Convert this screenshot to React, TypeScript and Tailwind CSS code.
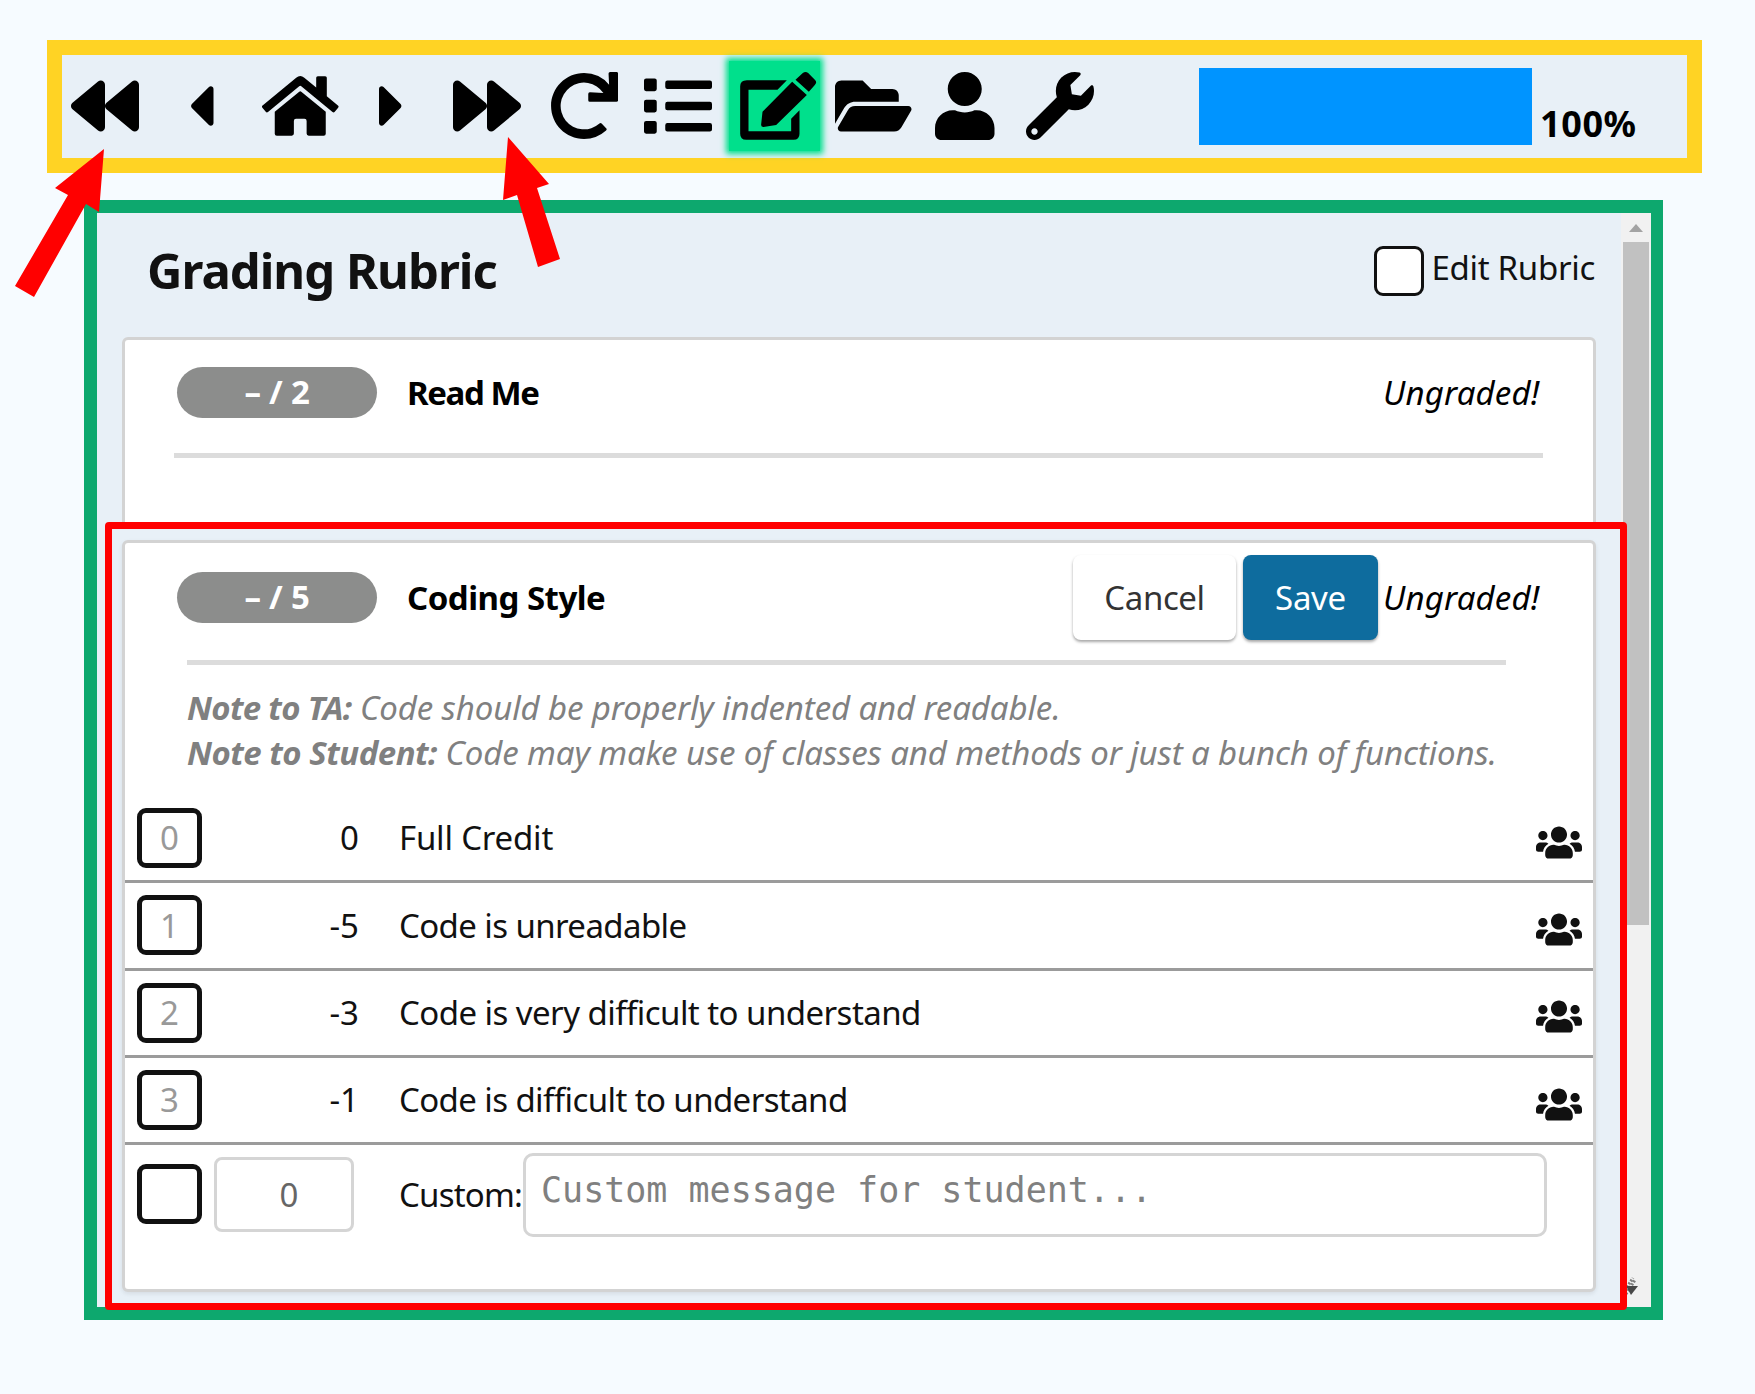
import {
  FaBackward,
  FaCaretLeft,
  FaCaretRight,
  FaFolderOpen,
  FaForward,
  FaHome,
  FaList,
  FaRedo,
  FaUser,
  FaUsers,
  FaWrench,
} from 'react-icons/fa'

const rows = [
  { key: '0', value: '0', label: 'Full Credit', tracking: 'tracking-[-0.2px]' },
  { key: '1', value: '-5', label: 'Code is unreadable', tracking: 'tracking-[-0.6px]' },
  { key: '2', value: '-3', label: 'Code is very difficult to understand', tracking: 'tracking-[-0.55px]' },
  { key: '3', value: '-1', label: 'Code is difficult to understand', tracking: 'tracking-[-0.6px]' },
]

function EditIcon() {
  return (
    <svg className="h-[68px] w-[77px] shrink-0" viewBox="630 65 230 204" fill="currentColor">
      <path d="M650 90 H770 L742 118 H655 V243 H783 V205 L808 180 V250 Q808 268 790 268 H648 Q630 268 630 250 V108 Q630 90 650 90 Z" />
      <path d="M786 94 L830 134 L738 224 L700 230 Q692 230 693 222 L697 184 Z" />
      <path d="M796 88 L818 68 Q826 62 834 68 L854 88 Q862 96 854 104 L836 124 Z" />
    </svg>
  )
}

function Toolbar() {
  return (
    <div className="ml-[47px] flex h-[133px] w-[1655px] items-center border-[15px] border-[#ffd324] bg-[#e8f0f7] text-black">
      <FaBackward className="mb-[2px] ml-[9px] h-[68px] w-[68px] shrink-0" />
      <FaCaretLeft className="mb-[2px] ml-[49px] h-[68px] w-[25.5px] shrink-0" />
      <FaHome className="mb-[2px] ml-[48.5px] h-[68px] w-[76.5px] shrink-0" />
      <FaCaretRight className="mb-[2px] ml-[40.5px] h-[68px] w-[25.5px] shrink-0" />
      <FaForward className="mb-[2px] ml-[48.5px] h-[68px] w-[68px] shrink-0" />
      <FaRedo className="mb-[2px] ml-[29px] h-[68px] w-[68px] shrink-0" />
      <FaList className="mb-[2px] ml-[26px] h-[68px] w-[68px] shrink-0" />
      <div className="mb-[2px] ml-[17px] flex h-[90px] w-[91px] shrink-0 items-center bg-[#00e08c] pl-[11px] shadow-[0_0_6px_3px_#00e08c]">
        <EditIcon />
      </div>
      <FaFolderOpen className="mb-[2px] ml-[15px] h-[68px] w-[76.5px] shrink-0" />
      <FaUser className="mb-[2px] ml-[23.5px] h-[68px] w-[59.5px] shrink-0" />
      <FaWrench className="mb-[2px] ml-[31.5px] h-[68px] w-[68px] shrink-0" />
      <div className="ml-[105px] h-[77px] w-[333px] shrink-0 bg-[#0094ff]" />
      <span className="ml-[8px] mt-[35px] text-[36px] font-bold leading-[40px] tracking-[0.6px]">100%</span>
    </div>
  )
}

function Pill({ total }: { total: number }) {
  return (
    <div className="flex h-[51px] w-[200px] shrink-0 items-center justify-center rounded-[26px] bg-[#8c8d8c] pb-[1px] text-[33px] font-bold tracking-[-0.2px] text-white">
      – / {total}
    </div>
  )
}

function Ungraded() {
  return (
    <span className="ml-[5px] w-[156px] shrink-0 whitespace-nowrap text-right text-[33px] italic tracking-[0.15px] text-black">
      Ungraded!
    </span>
  )
}

function RubricRow({
  rowKey,
  value,
  label,
  tracking,
}: {
  rowKey: string
  value: string
  label: string
  tracking: string
}) {
  return (
    <div className="flex h-[87.33px] items-center border-b-[3px] border-[#9b9b9b] pl-[12px] pr-[11px]">
      <div className="flex h-[60px] w-[65px] shrink-0 items-center justify-center rounded-[9px] border-[5px] border-[#111] text-[33px] text-[#999]">
        {rowKey}
      </div>
      <span className="w-[157px] shrink-0 text-right text-[33px] text-[#111]">{value}</span>
      <span className={`ml-[40px] text-[33px] text-[#111] ${tracking}`}>{label}</span>
      <FaUsers className="ml-auto mt-[8px] h-[37px] w-[46px] shrink-0 text-[#111]" />
    </div>
  )
}

function Scrollbar() {
  return (
    <div className="flex w-[30px] shrink-0 flex-col bg-[#f1f1f1]">
      <div className="flex h-[29px] items-center justify-center">
        <svg width="14" height="8" viewBox="0 0 14 8">
          <polygon points="7,0 14,8 0,8" fill="#a3a3a3" />
        </svg>
      </div>
      <div className="mx-[2px] h-[683px] bg-[#c1c1c1]" />
      <div className="mt-auto h-[34px]">
        <svg width="24" height="26" viewBox="0 0 24 26">
          <path d="M2 20 L12 5 M5 21 L14 7" stroke="#808080" strokeWidth="3" strokeDasharray="2 1.5" />
          <polygon points="5,13 17,13 10,22" fill="#484848" />
        </svg>
      </div>
    </div>
  )
}

export default function App() {
  return (
    <div className="relative min-h-[1394px] overflow-hidden bg-[#f6fbff] pt-[40px] font-['Noto_Sans',sans-serif]">
      <Toolbar />

      <div className="ml-[84px] mt-[27px] flex h-[1120px] w-[1579px] border-y-[13px] border-l-[13px] border-r-[12px] border-[#0da86e] bg-[#e8f0f7]">
        <div className="flex-1 overflow-hidden">
          <header className="flex h-[124px] items-center pb-[9px] pl-[50px] pr-[26px]">
            <h1 className="text-[49px] font-bold tracking-[-1px] text-[#111]">Grading Rubric</h1>
            <label className="ml-auto flex items-center gap-[7px] text-[33px] tracking-[-0.3px] text-[#111]">
              <span className="h-[50px] w-[50px] rounded-[9px] border-[3px] border-[#111] bg-white" />
              <span className="pb-[5px]">Edit Rubric</span>
            </label>
          </header>

          <section className="ml-[25px] h-[192px] w-[1474px] rounded-[6px] border-[3px] border-[#d3d3d3] bg-white">
            <div className="mt-[27px] flex items-center pl-[52px] pr-[54px]">
              <Pill total={2} />
              <strong className="ml-[30px] text-[33px] font-bold tracking-[-1.4px] text-black">Read Me</strong>
              <span className="ml-auto" />
              <Ungraded />
            </div>
            <div className="ml-[49px] mt-[35px] h-[5px] w-[1369px] bg-[#dcdcdc]" />
          </section>

          <section className="ml-[25px] mt-[11px] h-[752px] w-[1474px] rounded-[6px] border-[3px] border-[#d3d3d3] bg-white shadow-[0_2px_4px_rgba(0,0,0,0.08)]">
            <div className="mt-[12px] flex h-[85px] items-center pl-[52px] pr-[54px]">
              <Pill total={5} />
              <strong className="ml-[30px] text-[33px] font-bold tracking-[-0.5px] text-black">Coding Style</strong>
              <button className="ml-auto h-[85px] w-[163px] rounded-[8px] bg-white text-[33px] tracking-[-0.4px] text-[#333] shadow-[0_2px_3px_rgba(0,0,0,0.35)]">
                Cancel
              </button>
              <button className="ml-[7px] h-[85px] w-[135px] rounded-[8px] bg-[#0e6c9e] text-[33px] tracking-[-0.3px] text-white shadow-[0_2px_3px_rgba(0,0,0,0.35)]">
                Save
              </button>
              <Ungraded />
            </div>
            <div className="ml-[62px] mt-[20px] h-[5px] w-[1319px] bg-[#dcdcdc]" />
            <div className="ml-[62px] mt-[19.5px] whitespace-nowrap text-[33px] italic leading-[45px] tracking-[-0.12px] text-[#808080]">
              <p>
                <b className="tracking-[-0.7px]">Note to TA:</b> Code should be properly indented and readable.
              </p>
              <p>
                <b className="tracking-[-0.5px]">Note to Student:</b> Code may make use of classes and methods or just a bunch of functions.
              </p>
            </div>
            <div className="mt-[21.5px]">
              {rows.map((row) => (
                <RubricRow key={row.key} rowKey={row.key} value={row.value} label={row.label} tracking={row.tracking} />
              ))}
              <div className="flex items-start pl-[12px]">
                <span className="mt-[19px] h-[60px] w-[65px] shrink-0 rounded-[9px] border-[5px] border-[#111]" />
                <input
                  readOnly
                  defaultValue="0"
                  className="ml-[12px] mt-[12px] h-[75px] w-[140px] rounded-[8px] border-[3px] border-[#d5d5d5] pl-[10px] text-center text-[33px] text-[#666] outline-none"
                />
                <span className="ml-[45px] mt-[27px] w-[124px] shrink-0 whitespace-nowrap text-[33px] leading-[45px] tracking-[-0.8px] text-[#111]">
                  Custom:
                </span>
                <textarea
                  readOnly
                  rows={1}
                  placeholder="Custom message for student..."
                  className="mt-[8px] h-[84px] w-[1024px] resize-none overflow-hidden rounded-[10px] border-[3px] border-[#d5d5d5] px-[15px] pb-[5px] pt-[8px] font-['DejaVu_Sans_Mono',monospace] text-[35px] outline-none placeholder:text-[#808080]"
                />
              </div>
            </div>
          </section>
        </div>
        <Scrollbar />
      </div>

      {/* red callouts drawn on top of the screenshot */}
      <div className="pointer-events-none absolute left-[105px] top-[522px] h-[788px] w-[1522px] rounded-[4px] border-[7px] border-[#ff0000]" />
      <svg className="pointer-events-none absolute left-0 top-0" width="600" height="320" viewBox="0 0 600 320">
        <polygon points="104,149 99,212 86,204 34,297 15,286 68,195 55,188" fill="#ff0000" />
        <polygon points="508,137 549,184 537,188 560,259 538,267 517,195 503,200" fill="#ff0000" />
      </svg>
    </div>
  )
}
